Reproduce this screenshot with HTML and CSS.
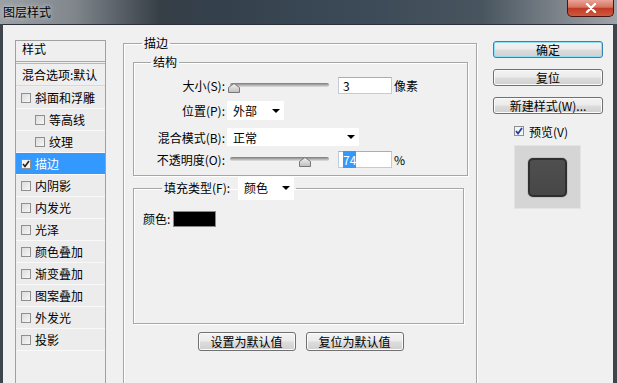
FILE: index.html
```html
<!DOCTYPE html>
<html lang="zh-CN">
<head>
  <meta charset="UTF-8">
  <title>图层样式</title>
  <link rel="stylesheet" href="styles.css">
</head>
<body>
  <div class="titlebar">
    <span class="title">图层样式</span>
    <span class="close">
      <svg width="12" height="10" viewBox="0 0 12 10"><path d="M2 1 L10 9 M10 1 L2 9" stroke="#fff" stroke-width="2.4" stroke-linecap="round"/></svg>
    </span>
  </div>

  <div class="client">
    <!-- список эффектов -->
    <div class="styles-list">
      <div class="list-head">样式</div>
      <div class="list-blend">混合选项:默认</div>
      <div class="items">
        <div class="item"><span class="cb"></span>斜面和浮雕</div>
        <div class="item sub"><span class="cb"></span>等高线</div>
        <div class="item sub"><span class="cb"></span>纹理</div>
        <div class="item selected"><span class="cb checked"><svg width="8" height="8" viewBox="0 0 8 8"><path d="M1 4 L3 6.5 L7 1" fill="none" stroke="#222" stroke-width="1.6"/></svg></span>描边</div>
        <div class="item"><span class="cb"></span>内阴影</div>
        <div class="item"><span class="cb"></span>内发光</div>
        <div class="item"><span class="cb"></span>光泽</div>
        <div class="item"><span class="cb"></span>颜色叠加</div>
        <div class="item"><span class="cb"></span>渐变叠加</div>
        <div class="item"><span class="cb"></span>图案叠加</div>
        <div class="item"><span class="cb"></span>外发光</div>
        <div class="item"><span class="cb"></span>投影</div>
      </div>
    </div>

    <div class="center">
      <fieldset class="group outer">
        <legend>描边</legend>

        <fieldset class="group struct">
          <legend>结构</legend>
          <div class="field r-size">
            <label>大小(S):</label>
            <div class="slider">
              <div class="track"></div>
              <svg class="thumb" style="left: 1px" width="12" height="10" viewBox="0 0 12 10"><defs><linearGradient id="tg1" x1="0" y1="0" x2="0" y2="1"><stop offset="0" stop-color="#f4f4f4"/><stop offset="1" stop-color="#bdbdbd"/></linearGradient></defs><path d="M6 0.5 L11.5 4.5 L11.5 9.5 L0.5 9.5 L0.5 4.5 Z" fill="url(#tg1)" stroke="#777"/></svg>
            </div>
            <div class="textbox">3</div>
            <span class="unit">像素</span>
          </div>
          <div class="field r-pos">
            <label>位置(P):</label>
            <div class="select sel-pos"><span>外部</span><i class="arrow"></i></div>
          </div>
          <div class="field r-mode">
            <label>混合模式(B):</label>
            <div class="select sel-mode"><span>正常</span><i class="arrow"></i></div>
          </div>
          <div class="field r-opacity">
            <label>不透明度(O):</label>
            <div class="slider">
              <div class="track"></div>
              <svg class="thumb" style="left: 72px" width="12" height="10" viewBox="0 0 12 10"><defs><linearGradient id="tg2" x1="0" y1="0" x2="0" y2="1"><stop offset="0" stop-color="#f4f4f4"/><stop offset="1" stop-color="#bdbdbd"/></linearGradient></defs><path d="M6 0.5 L11.5 4.5 L11.5 9.5 L0.5 9.5 L0.5 4.5 Z" fill="url(#tg2)" stroke="#777"/></svg>
            </div>
            <div class="textbox"><span class="hl">74</span></div>
            <span class="unit">%</span>
          </div>
        </fieldset>

        <fieldset class="group fill">
          <legend><span class="fill-label">填充类型(F):</span><span class="select sel-fill"><span>颜色</span><i class="arrow"></i></span></legend>
          <div class="color-row">颜色:<span class="swatch"></span></div>
        </fieldset>

        <div class="defaults">
          <button class="btn wide">设置为默认值</button>
          <button class="btn wide">复位为默认值</button>
        </div>
      </fieldset>
    </div>

    <div class="side">
      <button class="btn primary">确定</button>
      <button class="btn">复位</button>
      <button class="btn">新建样式(W)...</button>
      <div class="preview-check">
        <span class="cb checked"><svg width="8" height="8" viewBox="0 0 8 8"><path d="M1 4 L3 6.5 L7 1" fill="none" stroke="#1e3f99" stroke-width="1.7"/></svg></span>预览(V)
      </div>
      <div class="preview">
        <div class="preview-square"></div>
      </div>
    </div>
  </div>
</body>
</html>
```

FILE: styles.css
```css
* {
  box-sizing: border-box;
}
html, body {
  margin: 0;
}
body {
  width: 617px;
  height: 383px;
  overflow: hidden;
  font-family: "Noto Sans CJK SC", "Liberation Sans", sans-serif;
  font-size: 12px;
  color: #000;
  background: #3e454c;
}

/* заголовок окна */
.titlebar {
  height: 24px;
  display: flex;
  align-items: flex-start;
  background: linear-gradient(90deg, #9ca1a6 0%, #80868c 12%, #363e46 26%, #34414d 36%, #3d4b58 60%, #48555f 78%, #7a8188 90%, #9ea4a9 100%);
}
.title {
  margin: 3px 0 0 3px;
  line-height: 17px;
  text-shadow: 0 0 5px rgba(255, 255, 255, 0.8);
}
.close {
  margin-left: auto;
  margin-right: 3px;
  width: 47px;
  height: 17px;
  border: 1px solid #4a1510;
  border-top: none;
  border-radius: 0 0 5px 5px;
  background: linear-gradient(#e9a497 0%, #d7735f 45%, #c13a26 52%, #cf5a3c 100%);
  display: flex;
  align-items: center;
  justify-content: center;
}

.client {
  display: flex;
  align-items: flex-start;
  height: 359px;
  margin: 0 4px 0 3px;
  overflow: hidden;
  border-top: 1px solid #2b3137;
  background: #f0f0f0;
}

/* левая колонка */
.styles-list {
  margin: 15px 0 0 12px;
  width: 91px;
  height: 344px;
  border: 1px solid #a0a0a0;
  border-bottom: none;
  background: #efefef;
}
.list-head {
  height: 21px;
  padding-left: 6px;
  line-height: 16px;
  border-bottom: 1px solid #a8a8a8;
}
.list-blend {
  margin-top: 1px;
  height: 23px;
  padding-left: 6px;
  line-height: 21px;
  border-top: 1px solid #b8b8b8;
  border-bottom: 1px solid #d8d8d8;
  white-space: nowrap;
  overflow: hidden;
}
.items {
  padding-top: 1px;
}
.item {
  height: 22px;
  display: flex;
  align-items: center;
  padding-left: 5px;
  border-bottom: 1px solid #f9f9f9;
  background: #ececec;
}
.item.sub {
  padding-left: 19px;
}
.item.selected {
  background: #3399ff;
  color: #fff;
}
.cb {
  width: 10px;
  height: 10px;
  margin-right: 4px;
  border: 1px solid #8f8f8f;
  background: linear-gradient(135deg, #dcdcdc, #f6f6f6);
  display: inline-flex;
  align-items: center;
  justify-content: center;
  flex: none;
}
.cb.checked {
  background: #f4f4f4;
}

/* центральная часть */
.center {
  margin: 10px 0 0 17px;
  width: 354px;
}
fieldset.group {
  margin: 0;
  border: 1px solid #a6a6a6;
  box-shadow: 1px 1px 0 #fff, inset 1px 1px 0 #fff;
}
fieldset.group legend {
  padding: 0 2px;
  line-height: 16px;
}
.outer {
  height: 349px;
  padding: 3px 8px 0 9px;
}
.outer > legend {
  margin-left: 9px;
}
.struct {
  width: 335px;
  padding: 7px 0 8px 0;
}
.struct > legend {
  margin-left: 17px;
}
.field {
  display: flex;
  align-items: center;
}
.field label {
  width: 91px;
  text-align: right;
  margin-right: 2px;
  flex: none;
}
.r-size { height: 17px; }
.r-pos { height: 19px; margin-top: 7px; }
.r-mode { height: 18px; margin-top: 8px; }
.r-opacity { height: 16px; margin-top: 5px; }

.slider {
  position: relative;
  width: 103px;
  height: 17px;
  flex: none;
}
.track {
  margin: 6px 0 0 3px;
  width: 99px;
  height: 4px;
  border-radius: 2px;
  background: linear-gradient(#7a7a7a, #b8b8b8 60%, #e2e2e2);
}
.thumb {
  position: absolute;
  top: 6px;
}
.textbox {
  margin-left: 8px;
  width: 54px;
  height: 17px;
  padding-left: 4px;
  line-height: 15px;
  background: #fff;
  border: 1px solid #c3ccd6;
  border-top-color: #abadb3;
}
.hl {
  background: #3399ff;
  color: #fff;
}
.unit {
  margin-left: 2px;
}

.select {
  display: flex;
  align-items: center;
  justify-content: space-between;
  background: #fff;
  padding: 0 4px 0 6px;
}
.sel-pos { width: 57px; height: 19px; }
.sel-mode { width: 132px; height: 18px; }
.arrow {
  width: 0;
  height: 0;
  border-left: 4px solid transparent;
  border-right: 4px solid transparent;
  border-top: 4px solid #000;
}

.fill {
  width: 331px;
  height: 148px;
  padding: 0;
}
.fill > legend {
  margin-left: 28px;
  padding-top: 6px;
  display: flex;
  align-items: center;
}
.fill-label {
  margin-right: 8px;
}
.sel-fill {
  width: 56px;
  height: 24px;
}
.color-row {
  display: flex;
  align-items: center;
  margin-top: 10px;
  padding-left: 9px;
}
.swatch {
  margin-left: 3px;
  width: 43px;
  height: 16px;
  background: #000;
  border: 1px solid #888;
}

.defaults {
  display: flex;
  justify-content: center;
  gap: 10px;
  margin-top: 8px;
}

/* кнопки */
.btn {
  font-family: inherit;
  font-size: 12px;
  color: #000;
  padding: 0;
  height: 17px;
  line-height: 15px;
  border: 1px solid #707070;
  border-radius: 3px;
  background: linear-gradient(#f3f3f3 0%, #ebebeb 48%, #dddddd 52%, #cfcfcf 100%);
  box-shadow: inset 0 0 0 1px #fbfbfb;
}
.btn.wide {
  width: 98px;
  height: 19px;
  line-height: 17px;
}
.btn.primary {
  border-color: #3c7fb1;
  box-shadow: inset 0 0 0 1px #8fe0f5;
}

/* правая колонка */
.side {
  margin: 16px 0 0 16px;
  width: 110px;
  display: flex;
  flex-direction: column;
}
.side .btn {
  width: 110px;
  margin-bottom: 11px;
}
.side .btn:nth-of-type(3) {
  margin-bottom: 0;
}
.preview-check {
  margin-top: 11px;
  padding-left: 21px;
  height: 12px;
  display: flex;
  align-items: center;
}
.preview-check .cb {
  margin-right: 5px;
}
.preview {
  margin: 8px 0 0 21px;
  width: 67px;
  height: 64px;
  background: #d5d5d5;
  border: 1px solid #e4e4e4;
  display: flex;
  align-items: center;
  justify-content: center;
}
.preview-square {
  width: 39px;
  height: 39px;
  border-radius: 5px;
  background: linear-gradient(#4f4f4f, #474747);
  border: 2px solid #2f2f2f;
  box-shadow: 0 0 1px #222;
}
```
